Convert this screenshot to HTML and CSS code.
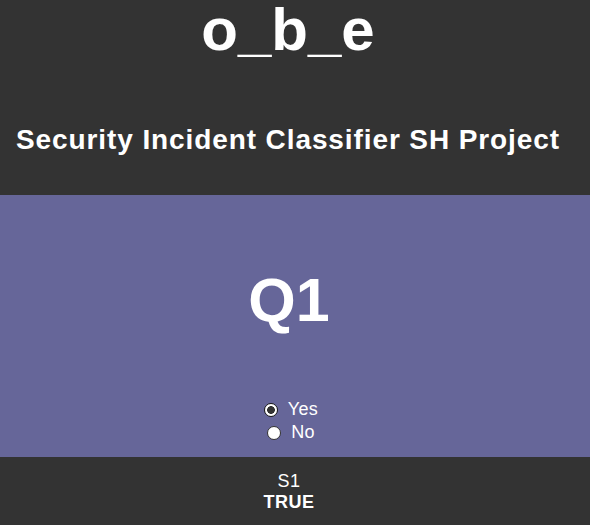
FILE: index.html
```html
<!DOCTYPE html>
<html lang="en">
<head>
<meta charset="utf-8">
<title>o_b_e</title>
<link rel="stylesheet" href="styles.css">
</head>
<body>
<header class="top">
  <h1 class="brand">o_b_e</h1>
  <h2 class="subtitle">Security Incident Classifier SH Project</h2>
</header>
<main class="question">
  <h2 class="q-title">Q1</h2>
  <form class="options">
    <label class="option"><input type="radio" name="q1" value="yes" checked><span>Yes</span></label>
    <label class="option"><input type="radio" name="q1" value="no"><span>No</span></label>
  </form>
</main>
<footer class="bottom">
  <div class="state">S1</div>
  <div class="result">TRUE</div>
</footer>
</body>
</html>
```
FILE: styles.css
```css
html, body {
  margin: 0;
  padding: 0;
}
body {
  font-family: "Liberation Sans", Arial, sans-serif;
  color: #ffffff;
  background: #333333;
}
.top {
  background: #333333;
  padding: 0 14px 38px 0;
  text-align: center;
}
.brand {
  margin: 0;
  font-size: 60px;
  line-height: 60px;
  font-weight: bold;
}
.subtitle {
  margin: 63px 0 0;
  font-size: 28px;
  line-height: 34px;
  font-weight: bold;
  letter-spacing: 0.9px;
}
.question {
  background: #666699;
  padding: 75px 0 13px;
  text-align: center;
}
.q-title {
  margin: 0 12px 68px 0;
  font-size: 61px;
  line-height: 60px;
  font-weight: bold;
}
.options {
  display: flex;
  flex-direction: column;
  padding-right: 8px;
}
.option {
  display: flex;
  justify-content: center;
  align-items: center;
  height: 23px;
  font-size: 18px;
  line-height: 23px;
  letter-spacing: 0.3px;
  gap: 10px;
}
.option input {
  appearance: none;
  -webkit-appearance: none;
  margin: 0;
  width: 14px;
  height: 14px;
  border-radius: 50%;
  border: 1px solid #333333;
  background: #ffffff;
  box-sizing: border-box;
}
.option input:checked {
  border-color: #1a1a1a;
  background: radial-gradient(circle, #333333 0 3.6px, #ffffff 4.1px);
}
.bottom {
  background: #333333;
  padding: 14px 12px 11px 0;
  text-align: center;
  font-size: 18px;
  line-height: 21px;
  letter-spacing: 0.5px;
}
.result {
  font-weight: bold;
}
```
